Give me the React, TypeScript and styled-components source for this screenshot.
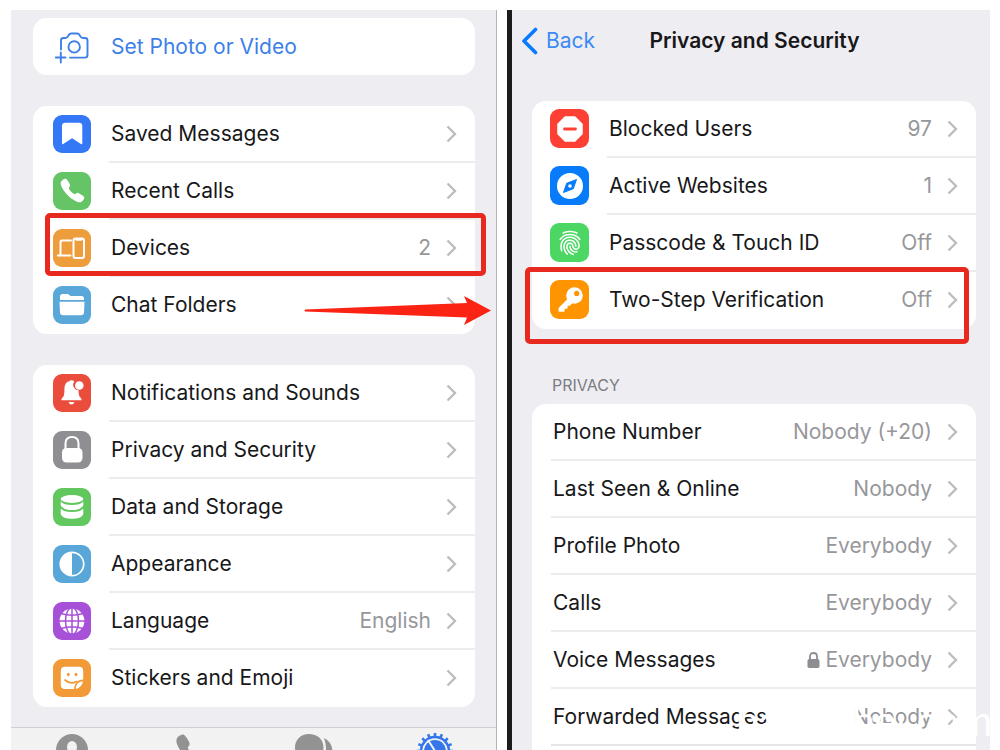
import React from "react";
import styled, { createGlobalStyle } from "styled-components";
import { IoCall, IoFingerPrint } from "react-icons/io5";

const GlobalStyle = createGlobalStyle`
  *, *::before, *::after { box-sizing: border-box; }
  body { margin: 0; background: #ffffff; }
`;

const Page = styled.main`
  position: relative;
  display: grid;
  grid-template-columns: 486fr 483fr;
  column-gap: 10px;
  height: 100vh;
  padding: 10px 10px 0 11px;
  overflow: hidden;
  background: #ffffff;
  color: #18181a;
  font-family: Inter, "Liberation Sans", sans-serif;
  font-size: 21px;
  line-height: 28px;
`;

const Panel = styled.section`
  min-width: 0;
  background: #eeedf2;
`;

const SettingsPanel = styled(Panel)`
  border-right: 1px solid #b4b4b8;
`;

const PrivacyPanel = styled(Panel)`
  border-left: 5px solid #1c1c1c;
`;

const SettingsBody = styled.div`
  display: flex;
  flex-direction: column;
  gap: 31px;
  padding: 8px 21px 20px 22px;
`;

const PrivacyBody = styled.div`
  padding: 0 14px 0 20px;
`;

const Card = styled.ul<{ $open?: boolean }>`
  margin: 0;
  padding: 0 0 ${(p) => (p.$open ? 57 : 0)}px;
  list-style: none;
  border-radius: 14px;
  background: #ffffff;

  > li:last-child > a > span:last-child {
    border-bottom-color: ${(p) => (p.$open ? "#e6e6e8" : "transparent")};
  }
`;

const Item = styled.li`
  position: relative;
`;

const RowLink = styled.a<{ $inset: number }>`
  display: flex;
  align-items: center;
  gap: 18px;
  height: 57px;
  padding-left: ${(p) => p.$inset}px;
  color: inherit;
  text-decoration: none;
`;

const RowContent = styled.span`
  display: flex;
  flex: 1;
  align-items: center;
  min-width: 0;
  height: 100%;
  padding: 0 18px 0 2px;
  border-bottom: 2px solid #ececee;
`;

const Label = styled.span`
  flex: 1;
  white-space: nowrap;
`;

const Value = styled.span`
  display: flex;
  align-items: center;
  gap: 5px;
  margin-right: 15px;
  color: #97979b;
`;

const Tile = styled.span<{ $color: string; $size: number }>`
  display: flex;
  flex: none;
  align-items: center;
  justify-content: center;
  width: ${(p) => p.$size}px;
  height: ${(p) => p.$size}px;
  margin-bottom: 2px;
  border-radius: 9px;
  background: ${(p) => p.$color};
  color: #ffffff;
`;

const PhotoButton = styled.button`
  display: flex;
  align-items: center;
  gap: 20px;
  width: 100%;
  height: 57px;
  padding: 0 20px;
  border: 0;
  border-radius: 14px;
  background: #ffffff;
  color: #3e7fe8;
  font: inherit;
  text-align: left;
`;

const Header = styled.header`
  display: grid;
  grid-template-columns: 1fr auto 1fr;
  align-items: center;
  height: 62px;
  margin-bottom: 29px;
  padding: 0 2px 0 9px;
`;

const BackLink = styled.a`
  display: flex;
  align-items: center;
  gap: 8px;
  color: #3a8bf5;
  text-decoration: none;
`;

const Title = styled.h1`
  margin: 0;
  font-size: 21px;
  font-weight: 600;
  line-height: 28px;
`;

const SectionTitle = styled.h2`
  margin: 0;
  padding: 44px 0 7px 20px;
  color: #7c7c82;
  font-size: 16px;
  font-weight: 400;
  line-height: 24px;
`;

const TabBar = styled.nav`
  display: grid;
  grid-template-columns: repeat(4, 1fr);
  height: 74px;
  border-top: 1px solid #cfcfd4;
  background: #f2f2f3;
`;

const Tab = styled.a<{ $active?: boolean }>`
  display: flex;
  justify-content: center;
  padding-top: 4px;
  color: ${(p) => (p.$active ? "#3576ea" : "#929292")};
`;

const Highlight = styled.span<{ $inset: string }>`
  position: absolute;
  inset: ${(p) => p.$inset};
  z-index: 1;
  border: 5px solid #e8291f;
  border-radius: 5px;
  pointer-events: none;
`;

const Arrow = styled.svg`
  position: absolute;
  top: 18px;
  right: -16px;
  z-index: 1;
  pointer-events: none;
`;

const Watermark = styled.span`
  position: absolute;
  right: 8px;
  bottom: 8px;
  z-index: 2;
  color: #ffffff;
  font-family: "Liberation Sans", sans-serif;
  font-size: 40px;
  line-height: 40px;
  white-space: nowrap;
  pointer-events: none;
`;

const Chevron = () => (
  <svg width="11" height="18" viewBox="0 0 11 18" fill="none" stroke="#bcbcc0" strokeWidth="2.3" aria-hidden="true">
    <path d="M1.5 1.5 9 9l-7.500 7.500" />
  </svg>
);

const Glyph = ({ children }: { children: React.ReactNode }) => (
  <svg width="38" height="38" viewBox="0 0 38 38" fill="none" aria-hidden="true">
    {children}
  </svg>
);

const icons = {
  camera: (
    <Glyph>
      <g stroke="currentColor" strokeWidth="1.900" strokeLinecap="round" strokeLinejoin="round">
        <path d="M8 21.500V12.500Q8 10 10.500 10H12.500Q14.200 10 15 8.400L15.600 7.200Q16.500 5.500 18.300 5.500H24Q25.800 5.500 26.700 7.200L27.300 8.400Q28.100 10 29.800 10H32Q34.500 10 34.500 12.500V27Q34.500 29.600 32 29.600H17" />
        <circle cx="21.200" cy="18.900" r="5.700" />
        <path d="M7.800 24.500V34.500M2.800 29.500H12.500" />
      </g>
    </Glyph>
  ),
  bookmark: (
    <Glyph>
      <path d="M12.500 7.800H26Q29.300 7.800 29.300 11V28.200Q29.300 29.800 28 29L19.100 23.200 10.200 29Q9 29.800 9 28.200V11Q9 7.800 12.500 7.800Z" fill="#fff" />
    </Glyph>
  ),
  devices: (
    <Glyph>
      <g stroke="#fff" strokeWidth="2" strokeLinecap="round" strokeLinejoin="round">
        <path d="M18 11.500H9Q7.500 11.500 7.500 13V25.500M4.800 26.500H17.500" />
        <rect x="20.500" y="9.500" width="10.500" height="19.500" rx="2" />
        <path d="M23.500 10.500H28" strokeWidth="2.500" />
      </g>
    </Glyph>
  ),
  folder: (
    <Glyph>
      <path d="M7 14V10.500Q7 8 9.500 8H14Q15.500 8 16.500 9L17.500 10H28.500Q31 10 31 12.500V14Z" fill="#fff" />
      <path d="M6.500 15.800H31.500L31 26.500Q30.800 29.200 28 29.200H10Q7.200 29.200 7 26.500Z" fill="#fff" />
    </Glyph>
  ),
  bell: (
    <Glyph>
      <path d="M18.500 6.200Q20 6.200 21.300 7.500 19.800 9.300 20.300 12 21.500 16 25.600 16.300V18.500Q25.600 22 27.800 24 28.800 25 28.500 26.300H8.500Q8.200 25 9.200 24 11.400 22 11.400 18V15Q11.400 8.200 16.300 7.200 17 6.200 18.500 6.200Z" fill="#fff" />
      <path d="M15.700 28H21.300Q20.800 30.500 18.500 30.500T15.700 28Z" fill="#fff" />
      <circle cx="26.300" cy="11.500" r="4.300" fill="#fff" />
    </Glyph>
  ),
  lock: (
    <Glyph>
      <path d="M12.500 19V12.500Q12.500 6 19 6T25.500 12.500V19" stroke="#fff" strokeWidth="2" />
      <rect x="9" y="17" width="20.500" height="14.500" rx="4.500" fill="#fff" />
    </Glyph>
  ),
  storage: (
    <Glyph>
      <g fill="#fff">
        <ellipse cx="19" cy="11" rx="11.300" ry="3.900" />
        <path d="M7.700 13.500Q10.500 17 19 17T30.300 13.500V17.300Q28.500 22 19 22T7.700 17.300Z" />
        <path d="M7.700 20.500Q10.500 24 19 24T30.300 20.500V26.200Q28.500 30.700 19 30.700T7.700 26.200Z" />
      </g>
    </Glyph>
  ),
  contrast: (
    <Glyph>
      <circle cx="19" cy="19" r="11.700" stroke="#fff" strokeWidth="1.700" />
      <path d="M19 7.500A11.500 11.500 0 0 0 19 30.500Z" fill="#fff" />
    </Glyph>
  ),
  globe: (
    <Glyph>
      <circle cx="19" cy="19" r="12.400" fill="#fff" />
      <g stroke="#a651d8" strokeWidth="1.500">
        <ellipse cx="19" cy="19" rx="6.500" ry="13.500" />
        <path d="M19 6V32M6 19H32M8 11.500Q19 15 30 11.500M8 26.500Q19 23 30 26.500" />
      </g>
    </Glyph>
  ),
  sticker: (
    <Glyph>
      <path d="M12 7.800H26Q30.200 7.800 30.200 12V20.500Q22 20.500 21 30H12Q7.800 30 7.800 26V12Q7.800 7.800 12 7.800Z" fill="#fff" />
      <path d="M30 22.200Q29 28.500 22.700 30 23 22.600 30 22.200Z" fill="#fff" />
      <g fill="#f19a37">
        <ellipse cx="15.300" cy="15.500" rx="1.400" ry="1.800" />
        <ellipse cx="23" cy="15.500" rx="1.400" ry="1.800" />
      </g>
      <path d="M12 21Q17.500 26 23.500 22.500" stroke="#f19a37" strokeWidth="1.800" strokeLinecap="round" />
    </Glyph>
  ),
  blocked: (
    <Glyph>
      <path d="M14.500 7.500H23.500L30.500 14.500V23.500L23.500 30.500H14.500L7.500 23.500V14.500Z" fill="#fff" stroke="#fff" strokeWidth="2.500" strokeLinejoin="round" />
      <path d="M13.500 19H24.500" stroke="#fd4033" strokeWidth="2.800" strokeLinecap="round" />
    </Glyph>
  ),
  compass: (
    <Glyph>
      <circle cx="19" cy="19" r="13" fill="#fff" />
      <path d="M25.500 12.500 22.300 21.700 12.500 25.500 15.700 16.300Z" fill="#087bfa" stroke="#087bfa" strokeLinejoin="round" />
      <circle cx="19" cy="19" r="1.800" fill="#fff" />
    </Glyph>
  ),
  key: (
    <Glyph>
      <path d="M17.200 18.700 8.500 27.400V29.700H12.700V26.800H15.600V23.800H18.400L21 21.200" fill="#fff" stroke="#fff" strokeWidth="2" strokeLinejoin="round" />
      <circle cx="23.500" cy="14.500" r="8.300" fill="#fff" />
      <circle cx="25.700" cy="12.400" r="2.600" fill="#fe9500" />
    </Glyph>
  ),
};

const SmallLock = () => (
  <svg width="13" height="16" viewBox="0 0 13 16" fill="none" aria-hidden="true">
    <path d="M3 8V4.500Q3 1 6.500 1T10 4.500V8" stroke="#8e8e92" strokeWidth="1.800" />
    <rect x="0.500" y="7" width="12" height="9" rx="1.800" fill="#8e8e92" />
  </svg>
);

const gearTeeth = Array.from({ length: 16 }, (_, i) => i * 22.5);

const ContactsIcon = () => (
  <svg width="34" height="34" viewBox="0 0 34 34" aria-hidden="true">
    <circle cx="17" cy="18" r="16" fill="currentColor" />
    <ellipse cx="17" cy="15" rx="5" ry="6" fill="#f2f2f3" />
    <path d="M7 28Q9 22 17 22T27 28Q17 36 7 28Z" fill="#f2f2f3" />
  </svg>
);

const ChatsIcon = () => (
  <svg width="40" height="34" viewBox="0 0 40 34" fill="currentColor" aria-hidden="true">
    <path d="M15 2C6.500 2 1 8 1 15.500Q1 21 5 25L3 31Q8 31 11 28.500C22 31 29.500 24 29.500 15.500S23 2 15 2Z" />
    <path d="M30 6Q38 10 38.500 19 38.500 23 36 26L38 32Q33 32 30 29.500 25 31 20 29.500 37 25 30 6Z" />
  </svg>
);

const GearIcon = () => (
  <svg width="38" height="38" viewBox="0 0 38 38" fill="none" stroke="currentColor" aria-hidden="true">
    <circle cx="19" cy="19" r="14" strokeWidth="2.500" />
    {gearTeeth.map((angle) => (
      <path key={angle} d="M19 1V5" strokeWidth="2.600" transform={`rotate(${angle} 19 19)`} />
    ))}
    <circle cx="19" cy="19" r="11" fill="currentColor" stroke="none" />
    <path d="M19 19 12 8M19 19H32M19 19 12 30" stroke="#f2f2f3" strokeWidth="2" />
  </svg>
);

type Entry = {
  label: string;
  value?: string;
  icon?: React.ReactNode;
  color?: string;
  locked?: boolean;
  mark?: React.ReactNode;
};

type GroupProps = {
  entries: Entry[];
  inset: number;
  tileSize?: number;
  open?: boolean;
};

const Group = ({ entries, inset, tileSize = 38, open }: GroupProps) => (
  <Card $open={open}>
    {entries.map((e) => (
      <Item key={e.label}>
        <RowLink href="#" $inset={inset}>
          {e.icon && (
            <Tile $color={e.color ?? "#999"} $size={tileSize}>
              {e.icon}
            </Tile>
          )}
          <RowContent>
            <Label>{e.label}</Label>
            {e.value && (
              <Value>
                {e.locked && <SmallLock />}
                {e.value}
              </Value>
            )}
            <Chevron />
          </RowContent>
        </RowLink>
        {e.mark}
      </Item>
    ))}
  </Card>
);

const shortcuts: Entry[] = [
  { label: "Saved Messages", icon: icons.bookmark, color: "#3478f6" },
  { label: "Recent Calls", icon: <IoCall size={27} />, color: "#65c466" },
  { label: "Devices", value: "2", icon: icons.devices, color: "#ee9d3c", mark: <Highlight $inset="-7px -11px 1px 12px" /> },
  {
    label: "Chat Folders",
    icon: icons.folder,
    color: "#5aa8d9",
    mark: (
      <Arrow width="187" height="31" viewBox="0 0 187 31" aria-hidden="true">
        <path d="M1 14.500 163 8 160 1 187 15.500 160 30 163 22.500 1 16.500Q0 15.500 1 14.500Z" fill="#fb2414" />
      </Arrow>
    ),
  },
];

const preferences: Entry[] = [
  { label: "Notifications and Sounds", icon: icons.bell, color: "#eb4d3d" },
  { label: "Privacy and Security", icon: icons.lock, color: "#8e8e93" },
  { label: "Data and Storage", icon: icons.storage, color: "#62c75f" },
  { label: "Appearance", icon: icons.contrast, color: "#58a7d8" },
  { label: "Language", value: "English", icon: icons.globe, color: "#a651d8" },
  { label: "Stickers and Emoji", icon: icons.sticker, color: "#f19a37" },
];

const security: Entry[] = [
  { label: "Blocked Users", value: "97", icon: icons.blocked, color: "#fd4033" },
  { label: "Active Websites", value: "1", icon: icons.compass, color: "#087bfa" },
  { label: "Passcode & Touch ID", value: "Off", icon: <IoFingerPrint size={26} />, color: "#4cd664" },
  { label: "Two-Step Verification", value: "Off", icon: icons.key, color: "#fe9500", mark: <Highlight $inset="-5px 7px -15px -7px" /> },
];

const privacy: Entry[] = [
  { label: "Phone Number", value: "Nobody (+20)" },
  { label: "Last Seen & Online", value: "Nobody" },
  { label: "Profile Photo", value: "Everybody" },
  { label: "Calls", value: "Everybody" },
  { label: "Voice Messages", value: "Everybody", locked: true },
  { label: "Forwarded Messages", value: "Nobody" },
];

export default function App() {
  return (
    <>
      <GlobalStyle />
      <Page>
        <SettingsPanel aria-label="Settings">
          <SettingsBody>
            <PhotoButton type="button">
              {icons.camera}
              Set Photo or Video
            </PhotoButton>
            <Group entries={shortcuts} inset={20} />
            <Group entries={preferences} inset={20} />
          </SettingsBody>
          <TabBar aria-label="Main">
            <Tab href="#" aria-label="Contacts"><ContactsIcon /></Tab>
            <Tab href="#" aria-label="Calls"><IoCall size={38} /></Tab>
            <Tab href="#" aria-label="Chats"><ChatsIcon /></Tab>
            <Tab href="#" aria-label="Settings" $active><GearIcon /></Tab>
          </TabBar>
        </SettingsPanel>
        <PrivacyPanel aria-label="Privacy and Security">
          <Header>
            <BackLink href="#">
              <svg width="17" height="28" viewBox="0 0 17 28" fill="none" stroke="#0a7aff" strokeWidth="3.600" strokeLinecap="round" strokeLinejoin="round" aria-hidden="true">
                <path d="M14.500 2.500 3 14l11.500 11.500" />
              </svg>
              Back
            </BackLink>
            <Title>Privacy and Security</Title>
          </Header>
          <PrivacyBody>
            <Group entries={security} inset={18} tileSize={39} />
            <SectionTitle>PRIVACY</SectionTitle>
            <Group entries={privacy} inset={19} open />
          </PrivacyBody>
        </PrivacyPanel>
        <Watermark>baituyibei.com</Watermark>
      </Page>
    </>
  );
}
